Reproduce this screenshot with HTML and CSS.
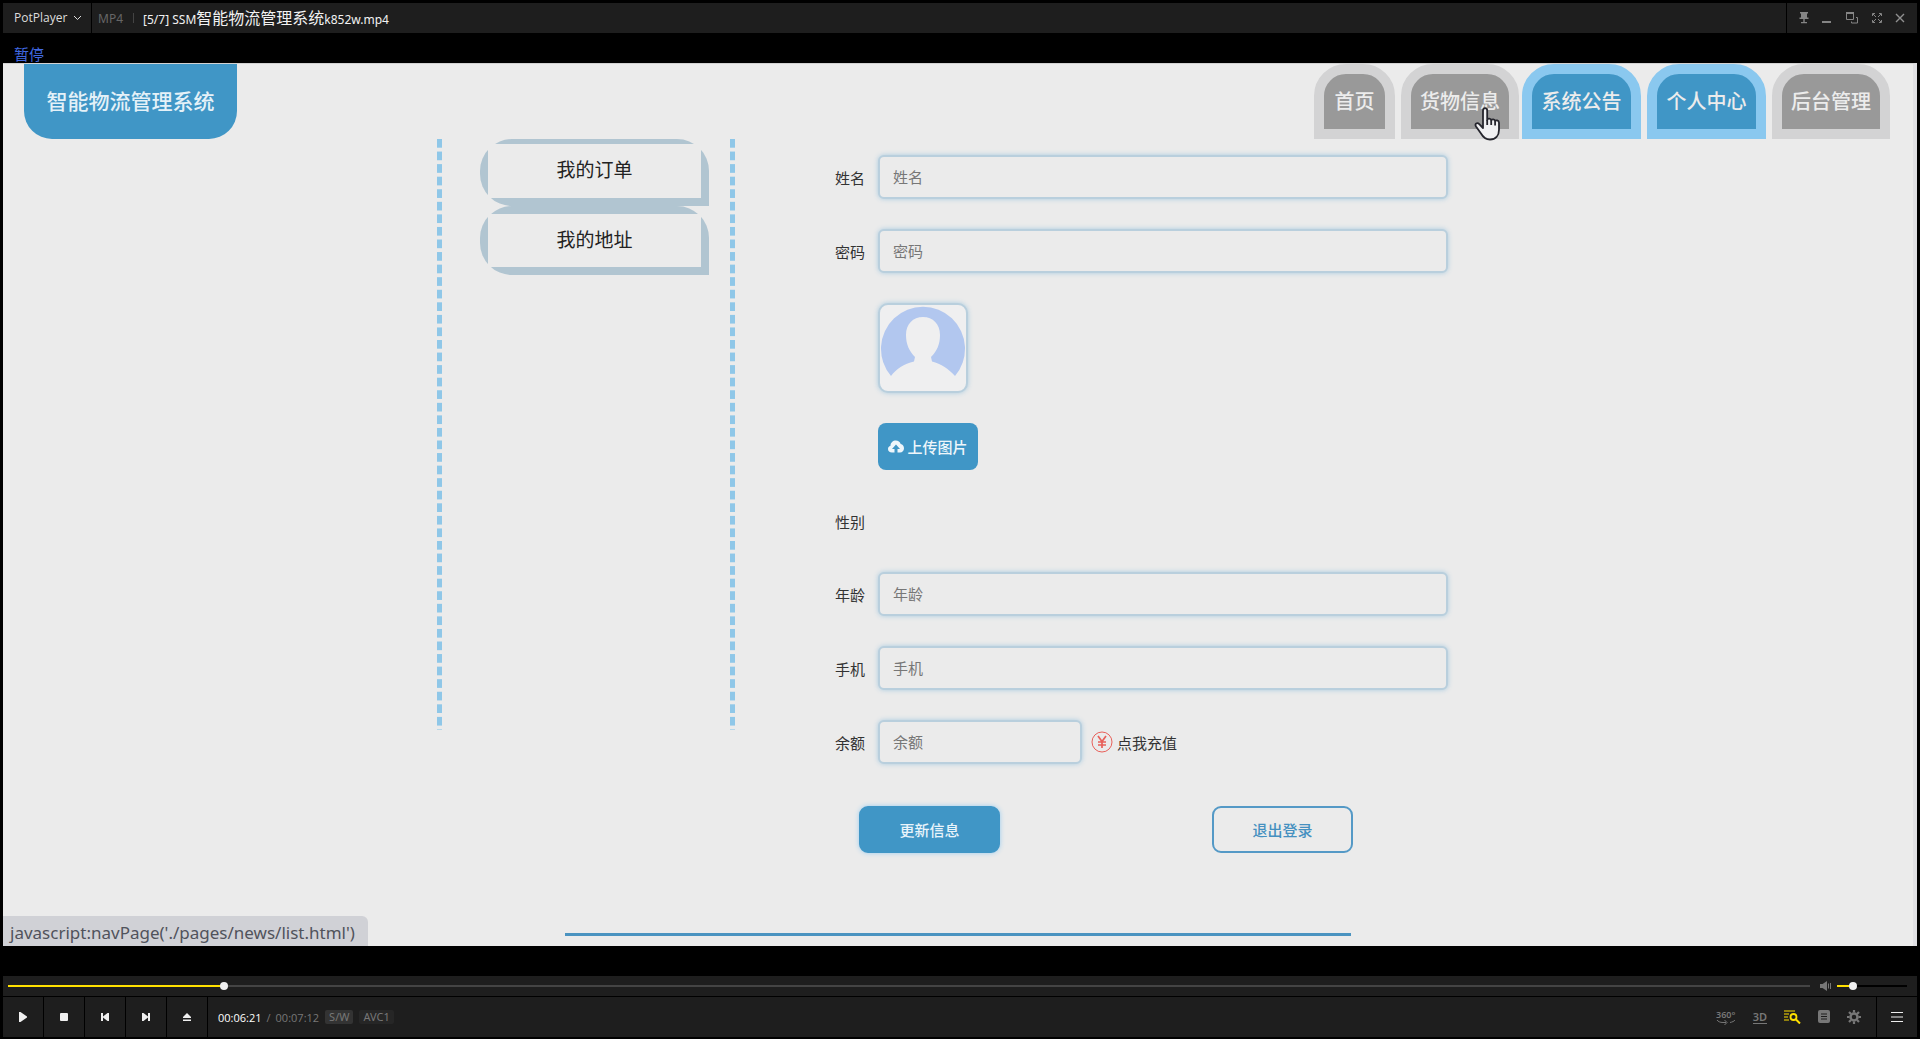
FILE: index.html
```html
<!DOCTYPE html>
<html lang="zh-CN">
<head>
<meta charset="utf-8">
<title>SSM智能物流管理系统k852w.mp4</title>
<link rel="stylesheet" href="styles.css">
</head>
<body>
<div class="player">
  <header class="titlebar">
    <button class="app-menu" type="button">PotPlayer
      <svg width="9" height="6" viewBox="0 0 9 6" fill="none" stroke="#ddd"><path d="M1 1l3.500 3.500L8 1"/></svg>
    </button>
    <span class="format">MP4</span>
    <span class="file-name">[5/7] SSM<span class="file-cjk">智能物流管理系统</span>k852w.mp4</span>
    <div class="window-buttons">
      <button type="button" aria-label="置顶"><svg width="10" height="12" viewBox="0 0 10 12" fill="#858585"><path d="M1 0h8v1.500H8v4h1.500V7H.5V5.500H2v-4H1zM4.300 7h1.400v3H8v1.300H2V10h2.300z"/></svg></button>
      <button type="button" aria-label="最小化"><svg width="10" height="12" viewBox="0 0 10 12" fill="#858585"><path d="M0 9h9v2H0z"/></svg></button>
      <button type="button" aria-label="还原"><svg width="12" height="12" viewBox="0 0 12 12" fill="none" stroke="#858585"><path d="M.5 1.500h7v6h-7zM0 1h8M10 5.500h1.500v5.500h-6V9.500"/><path d="M0 1h8" stroke-width="2"/></svg></button>
      <button type="button" aria-label="全屏"><svg width="10" height="12" viewBox="0 0 10 12" fill="none" stroke="#858585"><path d="M.5 4V1.500H3M7 1.500h2.500V4M9.500 8v2.500H7M3 10.500H.5V8M1 2l3 3M9 2L6 5M9 10L6 7M1 10l3-3"/></svg></button>
      <button type="button" aria-label="关闭"><svg width="10" height="12" viewBox="0 0 10 12" fill="none" stroke="#909090" stroke-width="1.400"><path d="M1 2l8 8M9 2L1 10"/></svg></button>
    </div>
  </header>

  <div class="osd">暂停</div>

  <div class="stage">
    <div class="site-header">
      <a class="logo" href="#">智能物流管理系统</a>
      <nav class="site-nav">
        <a class="tab tab-short" href="#">首页</a>
        <a class="tab tab-hover" href="#">货物信息</a>
        <a class="tab tab-active" href="#">系统公告</a>
        <a class="tab tab-active" href="#">个人中心</a>
        <a class="tab" href="#">后台管理</a>
        <svg class="pointer" width="27" height="34" viewBox="0 0 27 34" fill="#f0f0f2" stroke="#25252d" stroke-width="1.800" stroke-linejoin="round"><path d="M9 3.500c0-3.300 4.200-3.300 4.200 0V13c.2-2 3.800-1.800 4 .5.500-1.800 3.700-1.500 3.900.8.600-1.500 3.700-1.200 3.900 1.500v7c0 6-3.500 9.700-9 9.700-5 0-7-2.500-9-6L2 19.500c-1.800-3 1.300-4.500 3.300-2.300L9 21z"/><path d="M13.200 13v5M17.200 13.500V18M21.100 14.500V18.500" fill="none"/></svg>
      </nav>
    </div>

    <main class="content">
      <aside class="sidebar">
        <button class="side-item" type="button"><span>我的订单</span></button>
        <button class="side-item" type="button"><span>我的地址</span></button>
      </aside>

      <form class="profile">
        <div class="row"><label for="name">姓名</label><input class="field" id="name" type="text" placeholder="姓名"></div>
        <div class="row"><label for="password">密码</label><input class="field" id="password" type="password" placeholder="密码"></div>
        <div class="row row-indent">
          <div class="avatar"><svg viewBox="0 0 86 86"><path fill="#b2c7ef" d="M11 71A42 42 0 1 1 75 71C69 64 61 59 52 56.500L51 52C57 46 60 39 60 30 60 19 53 12 43 12S26 19 26 30C26 39 29 46 35 52L34 56.500C24 59 16 64 11 71z"/></svg></div>
        </div>
        <div class="row row-indent">
          <button class="upload" type="button"><svg width="16" height="13" viewBox="0 0 16 13" fill="#eef6fb"><path d="M4 12.500C1.500 12.500 0 11 0 9c0-1.700 1-2.900 2.500-3.300C2.500 2.500 5 .5 7.800.5c2.400 0 4.200 1.400 4.900 3.600C14.700 4.600 16 6.200 16 8.300c0 2.500-1.700 4.200-4 4.200H9.500V9H12L8 4.500 4 9h2.500v3.500z"/></svg>上传图片</button>
        </div>
        <div class="row row-empty"><span class="caption">性别</span></div>
        <div class="row"><label for="age">年龄</label><input class="field" id="age" type="text" placeholder="年龄"></div>
        <div class="row"><label for="phone">手机</label><input class="field" id="phone" type="text" placeholder="手机"></div>
        <div class="row">
          <label for="balance">余额</label><input class="field field-short" id="balance" type="text" placeholder="余额">
          <a class="recharge" href="#"><svg width="22" height="22" viewBox="0 0 22 22" fill="none" stroke="#e8605a"><circle cx="11" cy="11" r="10"/><path stroke-width="1.700" d="M7 5l4 5.500L15 5M11 10.500V17M7 11h8M7 14h8"/></svg>点我充值</a>
        </div>
        <div class="actions">
          <button class="action action-primary" type="button">更新信息</button>
          <button class="action" type="button">退出登录</button>
        </div>
      </form>
    </main>

    <div class="footer-line"></div>
    <div class="link-status">javascript:navPage('./pages/news/list.html')</div>
  </div>

  <div class="seekbar">
    <div class="track"><div class="track-fill" style="width:12%"></div><i class="knob"></i></div>
    <svg class="speaker" width="12" height="12" viewBox="0 0 12 12" fill="#777"><path d="M0 4h2.500L7 1v10L2.500 8H0zM8 3.500h1v5H8zM10 3h1v6h-1z"/></svg>
    <div class="track track-volume"><div class="track-fill" style="width:23%"></div><i class="knob"></i></div>
  </div>

  <footer class="controls">
    <button class="ctl" type="button" aria-label="播放"><svg width="10" height="10" viewBox="0 0 10 10"><path d="M1 0h1.500L9 4.500v1L2.500 10H1z"/></svg></button>
    <button class="ctl" type="button" aria-label="停止"><svg width="10" height="10" viewBox="0 0 10 10"><rect x="1" y="1" width="8" height="8" rx="1"/></svg></button>
    <button class="ctl" type="button" aria-label="上一个"><svg width="10" height="10" viewBox="0 0 10 10"><path d="M1 1h2v3.500L7.500 1H9v8H7.500L3 5.500V9H1z"/></svg></button>
    <button class="ctl" type="button" aria-label="下一个"><svg width="10" height="10" viewBox="0 0 10 10"><path d="M9 1H7v3.500L2.500 1H1v8h1.500L7 5.500V9h2z"/></svg></button>
    <button class="ctl" type="button" aria-label="打开"><svg width="10" height="10" viewBox="0 0 10 10"><path d="M5 1l4 4v1H1V5zM1 7.500h8V9H1z"/></svg></button>
    <div class="time"><span class="time-now">00:06:21</span><span>/</span><span>00:07:12</span></div>
    <span class="chip">S/W</span>
    <span class="chip chip-dim">AVC1</span>
    <div class="tools">
      <button class="tool-360" type="button">360°<svg width="20" height="6" viewBox="0 0 20 6" fill="none" stroke="#777"><path d="M1 1c1 1.500 3 2.500 6 2.500h3M8.500 1L11 3.500 8.500 6M19 1c-1 1.300-2.500 2-5 2.500"/></svg></button>
      <button class="tool-3d" type="button">3D</button>
      <button type="button" aria-label="播放列表搜索"><svg width="17" height="14" viewBox="0 0 17 14" fill="none" stroke="#ffe000"><path d="M0 1h11M0 4h5M0 7h4M0 10h5" stroke-width="1.200"/><circle cx="9.500" cy="7" r="3" stroke-width="1.800"/><path d="M12 9.500l4 4" stroke-width="2"/></svg></button>
      <button type="button" aria-label="列表"><svg width="12" height="14" viewBox="0 0 12 14"><rect width="12" height="13" rx="2" fill="#777"/><path d="M3 4h6M3 6.500h6M3 9h6" stroke="#1e1e1e"/></svg></button>
      <button type="button" aria-label="设置"><svg width="14" height="14" viewBox="0 0 14 14" fill="none" stroke="#777"><circle cx="7" cy="7" r="3.500" stroke-width="2.500"/><path stroke-width="2.200" d="M7 0v2.500M7 11.500V14M0 7h2.500M11.500 7H14M2 2l2 2M10 10l2 2M12 2l-2 2M4 10l-2 2"/></svg></button>
    </div>
    <button class="ctl-menu" type="button" aria-label="菜单"><svg width="12" height="10" viewBox="0 0 12 10" stroke="#eee"><path d="M0 .5h12M0 5h12M0 9.500h12"/></svg></button>
  </footer>
</div>
</body>
</html>
```
FILE: styles.css
```css
* { box-sizing: border-box; }

body {
  margin: 0;
  background: #000;
  font-family: "Noto Sans", "Noto Sans CJK SC", sans-serif;
}

button {
  margin: 0;
  padding: 0;
  border: 0;
  background: none;
  color: inherit;
  font: inherit;
}

a { color: inherit; text-decoration: none; }
svg { display: block; flex: none; }

.player {
  display: flex;
  flex-direction: column;
  min-height: 100vh;
  padding: 3px 3px 2px;
}

/* Title bar */
.titlebar {
  display: flex;
  align-items: stretch;
  height: 30px;
  background: #1e1e1e;
  font-size: 12px;
  line-height: 28px;
  white-space: nowrap;
}

.app-menu {
  display: flex;
  align-items: center;
  gap: 6px;
  width: 89px;
  padding-left: 11px;
  border-right: 1px solid #000;
  color: #ddd;
  font-family: "Open Sans", sans-serif;
}

.format {
  position: relative;
  width: 51px;
  padding-left: 6px;
  color: #666;
  line-height: 32px;
}

.format::after {
  content: "";
  position: absolute;
  top: 10px;
  right: 9px;
  width: 1px;
  height: 10px;
  background: #444;
}

.file-name { color: #f2f2f2; line-height: 30px; }
.file-cjk { font-size: 16px; }

.window-buttons {
  display: flex;
  align-items: center;
  justify-content: space-around;
  width: 131px;
  margin-left: auto;
  padding: 0 5px;
  border-left: 1px solid #000;
}

.osd {
  height: 30px;
  padding-left: 11px;
  color: #4169e1;
  font-size: 15px;
  line-height: 42px;
}

/* Web page shown in the video */
.stage {
  position: relative;
  display: flex;
  flex: 1;
  flex-direction: column;
  background: #ebebeb;
  border-top: 1px solid #d2d2d2;
  border-right: 4px solid #e0e0e3;
}

.site-header {
  display: flex;
  justify-content: space-between;
  height: 75px;
  padding: 0 23px 0 21px;
}

.logo {
  width: 213px;
  border-radius: 0 0 28px 28px;
  background: #4096c6;
  color: #e4f1f8;
  font-size: 21px;
  font-weight: 500;
  line-height: 74px;
  text-align: center;
}

.site-nav {
  position: relative;
  display: flex;
  gap: 6px;
}

.tab {
  width: 118px;
  border: 10px solid #d3d3d4;
  border-radius: 32px 32px 0 0;
  background: #999;
  color: #ececec;
  font-size: 20px;
  font-weight: 500;
  line-height: 55px;
  text-align: center;
}

.tab-short { width: 81px; }
.tab-hover { margin-right: -3px; }
.tab-active { width: 119px; border-color: #8ac8ef; background: #4096c6; }

.pointer {
  position: absolute;
  top: 43px;
  left: 160px;
}

.content {
  display: flex;
  gap: 100px;
  width: 100%;
  max-width: 1042px;
  margin: 0 auto;
  padding-right: 31px;
}

.sidebar {
  display: flex;
  flex-direction: column;
  width: 298px;
  height: 591px;
  padding: 0 26px 0 43px;
  overflow: hidden;
  background:
    linear-gradient(#8fc7e8 9px, transparent 9px) left top / 5px calc(100% / 47) repeat-y,
    linear-gradient(#8fc7e8 9px, transparent 9px) right top / 5px calc(100% / 47) repeat-y;
}

.side-item {
  height: 69px;
  padding: 8px;
  border-radius: 32px 32px 0 32px;
  background: #b1c5d1;
  color: #222;
  font-size: 19px;
}

.side-item:first-child { height: 67px; padding-top: 5px; }

.side-item span {
  display: block;
  height: 100%;
  background: #ebebeb;
  line-height: 52px;
}

.profile {
  display: flex;
  flex: 1;
  flex-direction: column;
  gap: 30px;
  padding-top: 16px;
  color: #333;
  font-size: 16px;
}

.row { display: flex; align-items: center; }
.row label, .caption { width: 43px; font-size: 15px; }
.row-indent { padding-left: 43px; }
.row-empty { height: 42px; }

.field {
  flex: 1;
  min-width: 0;
  height: 44px;
  padding: 0 13px;
  border: 2px solid #b9cfdd;
  border-radius: 6px;
  background: #ebebeb;
  box-shadow: 0 0 5px #a9cbe0;
  color: #333;
  font: inherit;
  font-size: 15px;
}

.field::placeholder { color: #777; opacity: 1; }
.field-short { flex: 0 0 204px; }

.avatar {
  width: 90px;
  height: 90px;
  border: 2px solid #b9cfdd;
  border-radius: 10px;
  background: #efeff0;
  box-shadow: 0 0 5px #a9cbe0;
}

.upload {
  display: flex;
  align-items: center;
  justify-content: center;
  gap: 3px;
  width: 100px;
  height: 47px;
  border-radius: 8px;
  background: #4096c6;
  color: #eef6fb;
  font-size: 15px;
  font-weight: 500;
}

.recharge {
  display: flex;
  align-items: center;
  gap: 4px;
  margin-left: 9px;
  font-size: 15px;
}

.actions {
  display: flex;
  justify-content: space-between;
  margin-top: 12px;
  padding: 0 95px 0 24px;
}

.action {
  width: 141px;
  height: 47px;
  border: 2px solid #5499c6;
  border-radius: 9px;
  color: #4590c0;
  font-size: 15px;
  font-weight: 500;
}

.action-primary {
  border-color: #4096c6;
  background: #4096c6;
  box-shadow: 0 0 5px #9bcdf0;
  color: #e8f4fb;
}

.footer-line {
  width: 786px;
  max-width: 80%;
  height: 3px;
  margin: auto auto 10px;
  background: #4a93c0;
}

.link-status {
  position: absolute;
  bottom: 0;
  left: 0;
  height: 30px;
  padding: 0 13px 0 7px;
  border-radius: 0 6px 0 0;
  background: #d0d1d6;
  color: #50535c;
  font-size: 17px;
  line-height: 33px;
}

/* Player controls */
.seekbar {
  display: flex;
  align-items: center;
  height: 20px;
  margin-top: 30px;
  padding: 0 10px 0 5px;
  background: #1e1e1e;
}

.track {
  display: flex;
  flex: 1;
  align-items: center;
  height: 2px;
  background: #444;
}

.track-fill { height: 2px; background: #ffe000; }

.knob {
  width: 8px;
  height: 8px;
  margin-left: -4px;
  border-radius: 50%;
  background: #f0f0f0;
}

.speaker { margin: 0 5px 0 10px; }
.track-volume { flex: 0 0 70px; background: #000; }

.controls {
  display: flex;
  align-items: center;
  height: 40px;
  margin-top: 1px;
  background: #1e1e1e;
  color: #777;
  font-size: 11px;
}

.ctl, .ctl-menu {
  display: flex;
  align-items: center;
  justify-content: center;
  width: 41px;
  height: 40px;
  border-right: 1px solid #000;
  fill: #f0f0f0;
}

.ctl-menu { border-right: 0; border-left: 1px solid #000; }

.time { display: flex; gap: 5px; margin: 0 6px 0 10px; font-family: "Open Sans", sans-serif; font-size: 11px; }
.time-now { color: #fff; }

.chip {
  height: 14px;
  margin-right: 6px;
  padding: 0 4px;
  border-radius: 2px;
  background: #333;
  line-height: 14px;
}

.chip-dim { background: #262626; }

.tools {
  display: flex;
  align-items: center;
  gap: 17px;
  margin-left: auto;
  margin-right: 15px;
}

.tool-360 { width: 20px; font-size: 9px; font-weight: 600; line-height: 9px; }
.tool-3d {
  border-bottom: 1px solid #777;
  font-size: 11px;
  font-weight: 600;
  line-height: 12px;
}
```
